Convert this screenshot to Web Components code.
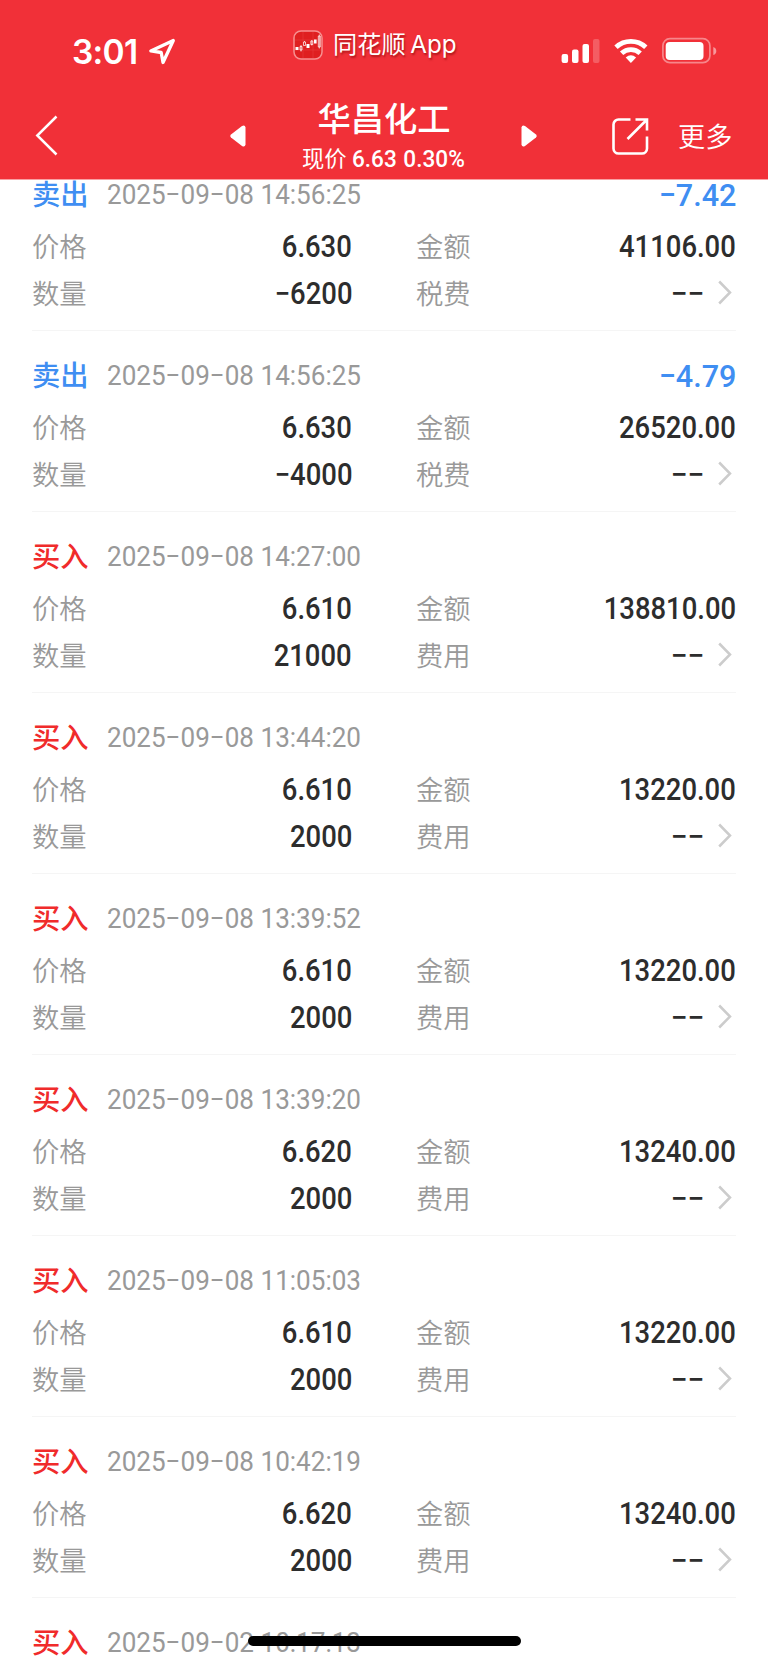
<!DOCTYPE html>
<html lang="zh-CN">
<head>
<meta charset="utf-8">
<title>华昌化工</title>
<style>
html,body{margin:0;height:1663px;overflow:hidden;background:#fff}
body{font-family:Roboto,"Noto Sans CJK SC",sans-serif}
</style>
</head>
<body>
<trade-app></trade-app>
<script>
const define = (name, html, setup) => customElements.define(name, class extends HTMLElement {
  constructor() {
    super();
    this.attachShadow({mode: 'open'}).innerHTML = html;
  }
  connectedCallback() { if (setup) setup(this, this.shadowRoot); }
});

define('narrow-text', `<style>
:host{display:inline-block;white-space:nowrap;transform:scaleX(var(--squeeze,.92));transform-origin:var(--from,right) center}
</style><slot></slot>`);

define('status-bar', `<style>
:host{display:flex;height:97px;color:#fff;align-items:flex-start}
.time{margin:32px 0 0 72px;width:68px;font:600 33.5px/40px Inter,sans-serif;letter-spacing:-.7px}
.loc{margin:37px 0 0 8px;width:28px;height:28px}
.app{margin:28px 0 0 117px;display:flex;align-items:center;width:166px;height:34px;font:400 24.2px/34px Inter,"Noto Sans CJK SC",sans-serif;text-shadow:1px 2px 2px #7008;white-space:nowrap}
.app svg{width:30px;height:30px;margin-right:10px;flex:none}
.app span{word-spacing:-2px}
.sys{margin:37px 0 0 102px;display:flex}
svg{display:block}
</style>
<div class="time">3:01</div>
<svg class="loc" viewBox="0 0 28 28" fill="none" stroke="#fff" stroke-width="3.300" stroke-linejoin="round"><path d="M25.300 3.500 L2.800 13.900 L13.200 15.500 L15 25.500 Z"/></svg>
<div class="app">
<svg viewBox="0 0 30 30"><rect x="1" y="1" width="28" height="28" rx="7" fill="#df1f20" stroke="#f79090" stroke-width="1.5"/><path d="M2 10H28M2 20H28M10 2V28M20 2V28" stroke="#e93d3d" stroke-width=".6"/><path d="M2.500 17h3v3h-3zM13.500 14h3v4h-3zM21 9.500h2.600v4h-2.600z" fill="#fff"/><path d="M7 16.500h2v3.500h-2zM10.500 12h2v3.500h-2zM17.800 11h2v3.500h-2zM25.300 6h2v11h-2zM8 15v6.500M11.500 11v1M18.800 10v5.500M26.300 4.500v14" fill="none" stroke="#fff" stroke-width=".7"/></svg>
<span>同花顺 App</span></div>
<div class="sys"><svg width="160" height="28" viewBox="0 0 160 28" fill="#fff">
<rect x=".6" y="17" width="6.500" height="9" rx="2"/><rect x="11" y="12.500" width="6.500" height="13.500" rx="2"/><rect x="21.500" y="7" width="6.500" height="19" rx="2"/><rect x="32" y="2" width="6.500" height="24" rx="2" opacity=".22"/>
<g fill="none" stroke="#fff" stroke-width="4.900"><path d="M55 10.200a22 22 0 0 1 29.800 0"/><path d="M60.600 16.200a13.800 13.800 0 0 1 18.600 0"/></g><path d="M64.700 20.500q5.200-4.400 10.400 0l-5.200 5.500z"/>
<rect x="101.900" y="1.700" width="47" height="24" rx="7" fill="none" stroke="#fff" stroke-opacity=".42" stroke-width="1.700"/><rect x="104.700" y="5" width="37.800" height="18" rx="4"/><path d="M152.300 10q3 1 3 4t-3 4z" opacity=".5"/></svg></div>`);

define('nav-bar', `<style>
:host{display:flex;height:82px;color:#fff;align-items:flex-start}
svg{display:block}
.back{margin:17px 0 0 34px}.prev{margin:27px 0 0 170px}
.title{width:220px;margin:0 29px 0 27px;text-align:center;white-space:nowrap}
h1{margin:1.500px 0 0;font:500 33.300px/42px Roboto,"Noto Sans CJK SC",sans-serif}
p{margin:4px 0 0;font:400 22.300px/28px Roboto,"Noto Sans CJK SC",sans-serif;display:flex;justify-content:center;gap:5px}
p span{display:block} narrow-text{margin:0 -7px 0 0;--from:left;font-size:24.300px;--squeeze:.93;font-weight:500;word-spacing:1px}
.next{margin:27px 0 0 -3px}.share{margin:20px 0 0 73px}
.more{margin:20px 0 0 29px;font:350 27.200px/36px "Noto Sans CJK SC",sans-serif;white-space:nowrap}
</style>
<svg class="back" width="25" height="44" viewBox="0 0 25 44" fill="none" stroke="#fff" stroke-width="2.500"><path d="M22.500 2.500L3.300 21.500L22.500 40.500"/></svg>
<svg class="prev" width="18" height="24" viewBox="0 0 18 24"><path d="M16.500 3.500V20.500Q16 23.500 13 22L2 13.500Q.3 12 2 10.500L13 2Q16 .5 16.500 3.500" fill="#fff"/></svg>
<div class="title"><h1>华昌化工</h1><p><span>现价</span><narrow-text>6.63 0.30%</narrow-text></p></div>
<svg class="next" width="18" height="24" viewBox="0 0 18 24"><path d="M1.500 3.500V20.500Q2 23.500 5 22L16 13.500Q17.700 12 16 10.500L5 2Q2 .5 1.500 3.500" fill="#fff"/></svg>
<svg class="share" width="38" height="38" viewBox="0 0 38 38" fill="none" stroke="#fff" stroke-width="2.600"><path d="M19.500 2.500H7.500a5 5 0 0 0-5 5V31.500a5 5 0 0 0 5 5H31a5 5 0 0 0 5-5V19.500M24.500 2.500H36V13.500M35.500 3L16.500 22"/></svg>
<div class="more">更多</div>`);

define('field-pair', `<style>
:host{display:flex;width:320px;height:46px;justify-content:space-between;align-items:center}
.k{font:350 27.300px/46px "Noto Sans CJK SC",sans-serif;color:#999;margin-top:-2px}
.v{display:flex;align-items:center;font:500 30.500px/46px Roboto,sans-serif;color:#2d2d2d;margin-top:1px}
narrow-text{--squeeze:.9}
svg{display:none;margin:-2px 4px 0 14px}
:host([more]) svg{display:block}
:host([more]) narrow-text{--squeeze:.98}
</style><span class="k"></span><span class="v"><narrow-text><slot></slot></narrow-text><svg width="14" height="25" viewBox="0 0 14 25" fill="none" stroke="#ccc" stroke-width="2.500"><path d="M1.200 1.500L12 12.500L1.200 23.500"/></svg></span>`,
(el, root) => { root.querySelector('.k').textContent = el.getAttribute('label'); });

define('trade-record', `<style>
:host{display:block;box-sizing:border-box;height:181px;margin:0 32px;border-bottom:1px solid #f5f5f5;padding-top:20px}
.head{display:flex;height:48px;align-items:center}
.side{font:500 28.300px/48px "Noto Sans CJK SC",sans-serif;width:75px;color:#f02b2b;margin-top:-2px}
:host([side="卖出"]) .side{color:#3f8ef2}
.date{font:400 27.300px/48px Roboto,sans-serif;color:#999;--squeeze:.955;--from:left;flex:1;margin-top:1px}
.gain{font:500 32px/48px Roboto,sans-serif;color:#3f8ef2;--squeeze:.955;margin-top:1px}
.grid{display:grid;grid-template-columns:320px 320px;column-gap:64px;row-gap:1px;padding-top:5px}
</style>
<div class="head"><span class="side"></span><narrow-text class="date"></narrow-text><narrow-text class="gain"></narrow-text></div>
<div class="grid"><field-pair label="价格"><span class="price"></span></field-pair><field-pair label="金额"><span class="amount"></span></field-pair><field-pair label="数量"><span class="qty"></span></field-pair><field-pair class="fee" more>−−</field-pair></div>`,
(el, root) => {
  for (const k of ['side','date','gain','price','amount','qty'])
    root.querySelector('.' + k).textContent = el.getAttribute(k) || '';
});
const feeSetup = el => el.shadowRoot.querySelector('.fee').shadowRoot.querySelector('.k').textContent =
  el.getAttribute('side') === '卖出' ? '税费' : '费用';

define('home-indicator', `<style>
:host{position:absolute;left:248px;bottom:17px;width:273px;height:10px;border-radius:5px;background:#000}
</style>`);

define('trade-app', `<style>
:host{display:block;position:relative;width:768px;height:1663px;overflow:hidden;background:#fff}
header{position:relative;z-index:1;height:180px;background:#f13038;border-bottom:1px solid #f9a0a3;box-sizing:border-box}
main{margin-top:-30px}
</style>
<header><status-bar></status-bar><nav-bar></nav-bar></header><main></main><home-indicator></home-indicator>`,
(el, root) => {
  const rows = [
    ['卖出','2025−09−08 14:56:25','6.630','41106.00','−6200','−7.42'],
    ['卖出','2025−09−08 14:56:25','6.630','26520.00','−4000','−4.79'],
    ['买入','2025−09−08 14:27:00','6.610','138810.00','21000',''],
    ['买入','2025−09−08 13:44:20','6.610','13220.00','2000',''],
    ['买入','2025−09−08 13:39:52','6.610','13220.00','2000',''],
    ['买入','2025−09−08 13:39:20','6.620','13240.00','2000',''],
    ['买入','2025−09−08 11:05:03','6.610','13220.00','2000',''],
    ['买入','2025−09−08 10:42:19','6.620','13240.00','2000',''],
    ['买入','2025−09−02 10:17:13','','','','']
  ];
  const main = root.querySelector('main');
  for (const values of rows) {
    const r = document.createElement('trade-record');
    ['side','date','price','amount','qty','gain'].forEach((k, i) => r.setAttribute(k, values[i]));
    main.append(r);
    if (values[2]) feeSetup(r); else r.shadowRoot.querySelector('.grid').remove();
  }
});
</script>
</body>
</html>
